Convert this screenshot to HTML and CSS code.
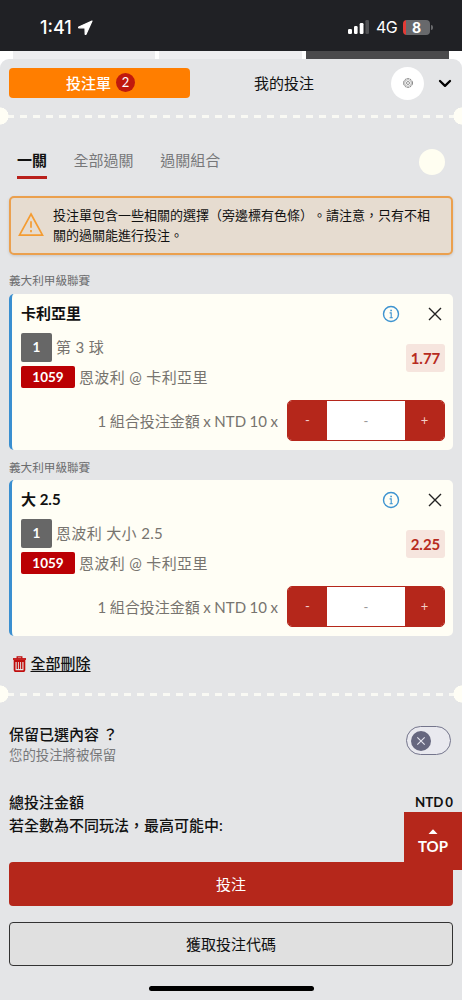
FILE: index.html
```html
<!DOCTYPE html>
<html lang="zh-TW">
<head>
<meta charset="utf-8">
<meta name="viewport" content="width=device-width, initial-scale=1">
<title>投注單</title>
<link rel="stylesheet" href="styles.css">
</head>
<body>
<div class="status">
  <div class="clock">1:41
    <svg width="15" height="15" viewBox="0 0 15 15"><path d="M14 1 L0.8 7 Q0 7.5 .8 7.8 L7 8 L7.2 14.2 Q7.5 15 8 14.2 Z" fill="#fff" stroke="#fff" stroke-linejoin="round" stroke-width="1.2"/></svg>
  </div>
  <div class="signal">
    <svg width="21" height="14" viewBox="0 0 21 14"><g fill="#fff"><rect x="0" y="9" width="4" height="5" rx="1.2"/><rect x="6" y="6" width="3.6" height="8" rx="1.2"/><rect x="11.7" y="3" width="3.8" height="11" rx="1.2"/></g><rect x="17.4" y="0" width="3.6" height="14" rx="1.2" fill="#505154"/></svg>
    <span class="net">4G</span>
    <span class="battery">8</span><span class="battery-cap"></span>
  </div>
</div>
<div class="behind"><i class="b1"></i><i class="b2"></i><i class="b3"></i></div>
<main class="panel">
  <header class="head">
    <div class="head-tab active">投注單<span class="count">2</span></div>
    <div class="head-tab mine">我的投注</div>
    <div class="gear"><svg width="12" height="12" viewBox="0 0 12 12" fill="none" stroke="#777"><circle cx="6" cy="6" r="4.4" stroke-width="1" stroke-dasharray="2.2 .55"/><circle cx="6" cy="6" r="3.3" stroke-width=".5"/><circle cx="6" cy="6" r="1.5" stroke-width=".8"/></svg></div>
    <svg class="chev" width="14" height="9" viewBox="0 0 14 9"><path d="M2 2 L7 6.8 L12 2" fill="none" stroke="#000" stroke-width="2.3" stroke-linecap="round" stroke-linejoin="round"/></svg>
  </header>
  <div class="perf"></div>
  <nav class="tabs">
    <span class="tab on">一關</span><span class="tab">全部過關</span><span class="tab">過關組合</span>
    <i class="knob"></i>
  </nav>
  <div class="alert">
    <svg width="26" height="25" viewBox="0 0 26 25" fill="none" stroke="#f49c32" stroke-width="1.7"><path d="M13 2 L24.5 23.2 H1.5 Z"/><path d="M13 9.2 V15.8 M13 18 V20.2"/></svg>
    <p>投注單包含一些相關的選擇（旁邊標有色條）<span class="mid">。</span>請注意<span class="mid">，</span>只有不相<br>關的過關能進行投注<span class="mid">。</span></p>
  </div>
  <div class="league first">義大利甲級聯賽</div>
  <section class="card">
    <div class="card-top"><b>卡利亞里</b>
      <svg class="info" width="18" height="18" viewBox="0 0 18 18" fill="none" stroke="#3d93d0" stroke-width="1.4"><circle cx="9" cy="9" r="7.5"/><path d="M7.6 7.9 H9.2 V12.7 M7.6 12.7 H10.8" stroke-width="1.1"/><path d="M8.3 5.4 H9.9" stroke-width="1.5"/></svg>
      <svg class="close" width="14" height="14" viewBox="0 0 14 14"><path d="M1 1 L13 13 M13 1 L1 13" stroke="#222" stroke-width="1.4"/></svg>
    </div>
    <div class="pick">
      <div class="lines">
        <div class="line"><span class="num">1</span><span>第 3 球</span></div>
        <div class="line"><span class="code">1059</span><span>恩波利 @ 卡利亞里</span></div>
      </div>
      <span class="odds">1.77</span>
    </div>
    <div class="stake"><span>1 組合投注金額 x NTD 10 x</span>
      <div class="stepper"><span>-</span><em>-</em><span>+</span></div>
    </div>
  </section>
  <div class="league">義大利甲級聯賽</div>
  <section class="card">
    <div class="card-top"><b>大 2.5</b>
      <svg class="info" width="18" height="18" viewBox="0 0 18 18" fill="none" stroke="#3d93d0" stroke-width="1.4"><circle cx="9" cy="9" r="7.5"/><path d="M7.6 7.9 H9.2 V12.7 M7.6 12.7 H10.8" stroke-width="1.1"/><path d="M8.3 5.4 H9.9" stroke-width="1.5"/></svg>
      <svg class="close" width="14" height="14" viewBox="0 0 14 14"><path d="M1 1 L13 13 M13 1 L1 13" stroke="#222" stroke-width="1.4"/></svg>
    </div>
    <div class="pick">
      <div class="lines">
        <div class="line"><span class="num">1</span><span>恩波利 大小 2.5</span></div>
        <div class="line"><span class="code">1059</span><span>恩波利 @ 卡利亞里</span></div>
      </div>
      <span class="odds">2.25</span>
    </div>
    <div class="stake"><span>1 組合投注金額 x NTD 10 x</span>
      <div class="stepper"><span>-</span><em>-</em><span>+</span></div>
    </div>
  </section>
  <div class="remove">
    <svg width="13" height="16" viewBox="0 0 13 16" fill="none" stroke="#c00d0d"><path d="M0 3 H13" stroke-width="1.8"/><path d="M4.2 2.4 V.8 H8.8 V2.4" stroke-width="1.3"/><path d="M1.6 5 V14 Q1.6 15.2 2.8 15.2 H10.2 Q11.4 15.2 11.4 14 V5 Z" stroke-width="1.8"/><path d="M4.3 5.5 V13 M6.5 5.5 V13 M8.7 5.5 V13" stroke-width="1.3"/></svg>
    <a>全部刪除</a>
  </div>
  <div class="perf"></div>
  <div class="keep">
    <div><b>保留已選內容<span class="ask">？</span></b><small>您的投注將被保留</small></div>
    <span class="toggle"><i><svg width="10" height="10" viewBox="0 0 10 10"><path d="M1.3 1.3 L8.7 8.7 M8.7 1.3 L1.3 8.7" stroke="#e6e6f0" stroke-width="1.1"/></svg></i></span>
  </div>
  <div class="totals">
    <div><span>總投注金額</span><span class="amount">NTD 0</span></div>
    <div><span>若全數為不同玩法<span class="mid">，</span>最高可能中:</span></div>
  </div>
  <div class="btn primary">投注</div>
  <div class="btn outline">獲取投注代碼</div>
  <div class="home"></div>
</main>
<div class="top"><svg width="10" height="5" viewBox="0 0 10 5"><path d="M.5 5 L5 .3 L9.5 5Z" fill="#fff"/></svg>TOP</div>
</body>
</html>
```
FILE: styles.css
```css
* { box-sizing: border-box; }
body {
  margin: 0; width: 462px; height: 1000px; overflow: hidden; position: relative;
  display: flex; flex-direction: column; background: #fff;
  font-family: Lato, "Noto Sans CJK TC", sans-serif; font-size: 15px; color: #111;
  white-space: nowrap; text-spacing-trim: space-all;
}
svg { display: block; flex: none; }
/* centred full-width punctuation */
.mid { display: inline-block; }
.ask { display: inline-block; transform: translateX(.25em); }
.status { height: 51px; flex: none; background: #202125; color: #fff; display: flex; justify-content: space-between; align-items: center; padding: 3px 29px 0 40px; font-family: Inter, sans-serif; }
.clock { display: flex; align-items: center; gap: 6px; font-size: 18px; font-weight: 500; letter-spacing: 0; }
.signal { display: flex; align-items: center; }
.net { font-size: 16px; margin: 0 6px 0 7px; letter-spacing: -.6px; }
.battery { width: 27px; height: 15px; border-radius: 4px; background: linear-gradient(90deg, #e33b36 3px, #68696c 3px); font-size: 14px; font-weight: 700; line-height: 15px; text-align: center; }
.battery-cap { width: 2px; height: 5px; background: #68696c; border-radius: 0 2px 2px 0; margin-left: 1px; }
.behind { height: 16px; flex: none; margin-bottom: -8px; display: flex; padding-left: 13px; gap: 4px; }
.b1 { width: 142px; background: #ededef; }
.b2 { width: 143px; background: #ededef; }
.b3 { width: 143px; background: #4a4a4c; }
.panel { flex: 1; position: relative; background: #e4e5e7; border-radius: 9px 9px 0 0; display: flex; flex-direction: column; }
.head { height: 48px; flex: none; display: flex; align-items: center; padding: 0 9px; }
.head-tab { display: flex; align-items: center; justify-content: center; height: 30px; padding-bottom: 2px; }
.active { width: 181px; background: #ff7e00; color: #fff; font-weight: 500; border-radius: 4px; gap: 5px; padding-left: 2px; }
.count { width: 19px; height: 19px; border-radius: 50%; background: #c0190d; font-size: 13px; font-weight: 400; line-height: 19px; text-align: center; margin-top: 1px; }
.mine { width: 188px; }
.gear { width: 33px; height: 33px; border-radius: 50%; background: #fff; display: flex; align-items: center; justify-content: center; margin-left: 13px; }
.chev { margin: 1px 0 0 14px; }
.perf { height: 18px; flex: none; background:
  radial-gradient(circle at 0 9px, #fffef5 8.3px, transparent 8.8px),
  radial-gradient(circle at 462px 9px, #fffef5 8.3px, transparent 8.8px),
  repeating-linear-gradient(90deg, #f9f9f4 0 7px, transparent 7px 13px) 7px 8px / 448px 3px no-repeat; }
.tabs { height: 71px; flex: none; display: flex; padding: 23px 17px 0; gap: 26.6px; align-items: flex-start; }
.tab { height: 32px; line-height: 25px; color: #77787a; }
.on { border-bottom: 3px solid #b9201b; height: 31px; color: #111; font-weight: 700; }
.knob { width: 26px; height: 26px; border-radius: 50%; background: #fffef1; margin: 1px 0 0 auto; }
.alert { margin: 0 9px; height: 59px; flex: none; border: 2px solid #eba04e; border-radius: 5px; background: #e6dcd0; display: flex; align-items: center; padding: 0 7px 3px; gap: 9px; box-shadow: 0 1px 3px #0002; }
.alert p { margin: 3px -6px 0 0; font-size: 13px; line-height: 19.5px; width: 385px; }
.league { height: 30px; flex: none; font-size: 11.6px; line-height: 35px; color: #6b6c6e; padding-left: 9px; }
.first { height: 39px; line-height: 52px; }
.card { height: 156px; flex: none; margin: 0 9px; border-radius: 5px; border-left: 3px solid #3a8fd0; background: #fffef5; padding: 5px 8px 0 9px; }
.card-top { height: 29px; display: flex; align-items: center; }
.card-top b { flex: 1; padding-bottom: 3px; }
.info { margin-right: 28px; }
.close { margin-right: 3px; }
.pick { display: flex; justify-content: space-between; align-items: flex-start; height: 60px; padding-top: 4px; }
.line { display: flex; align-items: center; gap: 4px; color: #77746f; height: 30px; letter-spacing: .35px; line-height: 22px; }
.line span:last-child { padding-bottom: 1px; }
.num, .code { color: #fff; font-weight: 700; font-size: 13.5px; border-radius: 2px; text-align: center; letter-spacing: 0; }
.num { width: 31px; height: 29px; line-height: 29px; background: #676767; }
.code { width: 54px; height: 22px; line-height: 22px; background: #bb0003; }
.odds { width: 39px; height: 28px; border-radius: 3px; background: #f6e5de; color: #b72a20; font-weight: 700; line-height: 28px; text-align: center; margin-top: 12px; font-size: 15px; }
.stake { display: flex; justify-content: flex-end; align-items: center; gap: 9px; height: 41px; margin-top: 12px; color: #77746f; word-spacing: -.3px; }
.stake > span { padding-bottom: 1px; }
.stepper { width: 158px; height: 41px; border-radius: 5px; border: 1px solid #b5271b; background: #fff; display: flex; overflow: hidden; line-height: 38px; text-align: center; font-size: 13px; }
.stepper span { width: 39px; background: #b5271b; color: #f3cec8; }
.stepper em { flex: 1; font-style: normal; color: #999; line-height: 40px; }
.remove { height: 49px; flex: none; display: flex; align-items: center; gap: 4.5px; padding: 7px 13px 0; }
.remove a { text-decoration: underline; text-underline-offset: 2px; font-weight: 500; line-height: 20px; padding-bottom: 2px; }
.keep { height: 84px; flex: none; display: flex; justify-content: space-between; padding: 20px 11px 0 9px; }
.keep b { display: block; line-height: 22px; font-weight: 500; }
.keep small { display: block; font-size: 13.4px; line-height: 20px; color: #77787a; }
.toggle { width: 45px; height: 29px; margin-top: 3px; border-radius: 15px; border: 1px solid #74758c; background: #e9e9ef; padding: 3.5px; }
.toggle i { width: 20px; height: 20px; border-radius: 50%; background: #66677f; display: flex; align-items: center; justify-content: center; }
.totals { padding: 4px 9px 0; height: 75px; flex: none; line-height: 23px; font-weight: 500; }
.totals > div { display: flex; justify-content: space-between; }
.amount { font-size: 13.3px; font-weight: 700; word-spacing: -1.4px; line-height: 23px; }
.btn { height: 44px; flex: none; margin: 0 9px; border-radius: 4px; display: flex; align-items: center; justify-content: center; padding-bottom: 2px; }
.primary { background: #b5271b; color: #fff; }
.outline { border: 1px solid #333; background: #e0e0e0; margin-top: 16px; }
.home { width: 165px; height: 5px; border-radius: 3px; background: #000; margin: 20px 0 0 149px; flex: none; }
.top { position: absolute; left: 404px; top: 812px; width: 58px; height: 58px; background: #b5271b; color: #fff; display: flex; flex-direction: column; align-items: center; gap: 3px; padding-top: 17px; font-weight: 700; line-height: 18px; }
```
